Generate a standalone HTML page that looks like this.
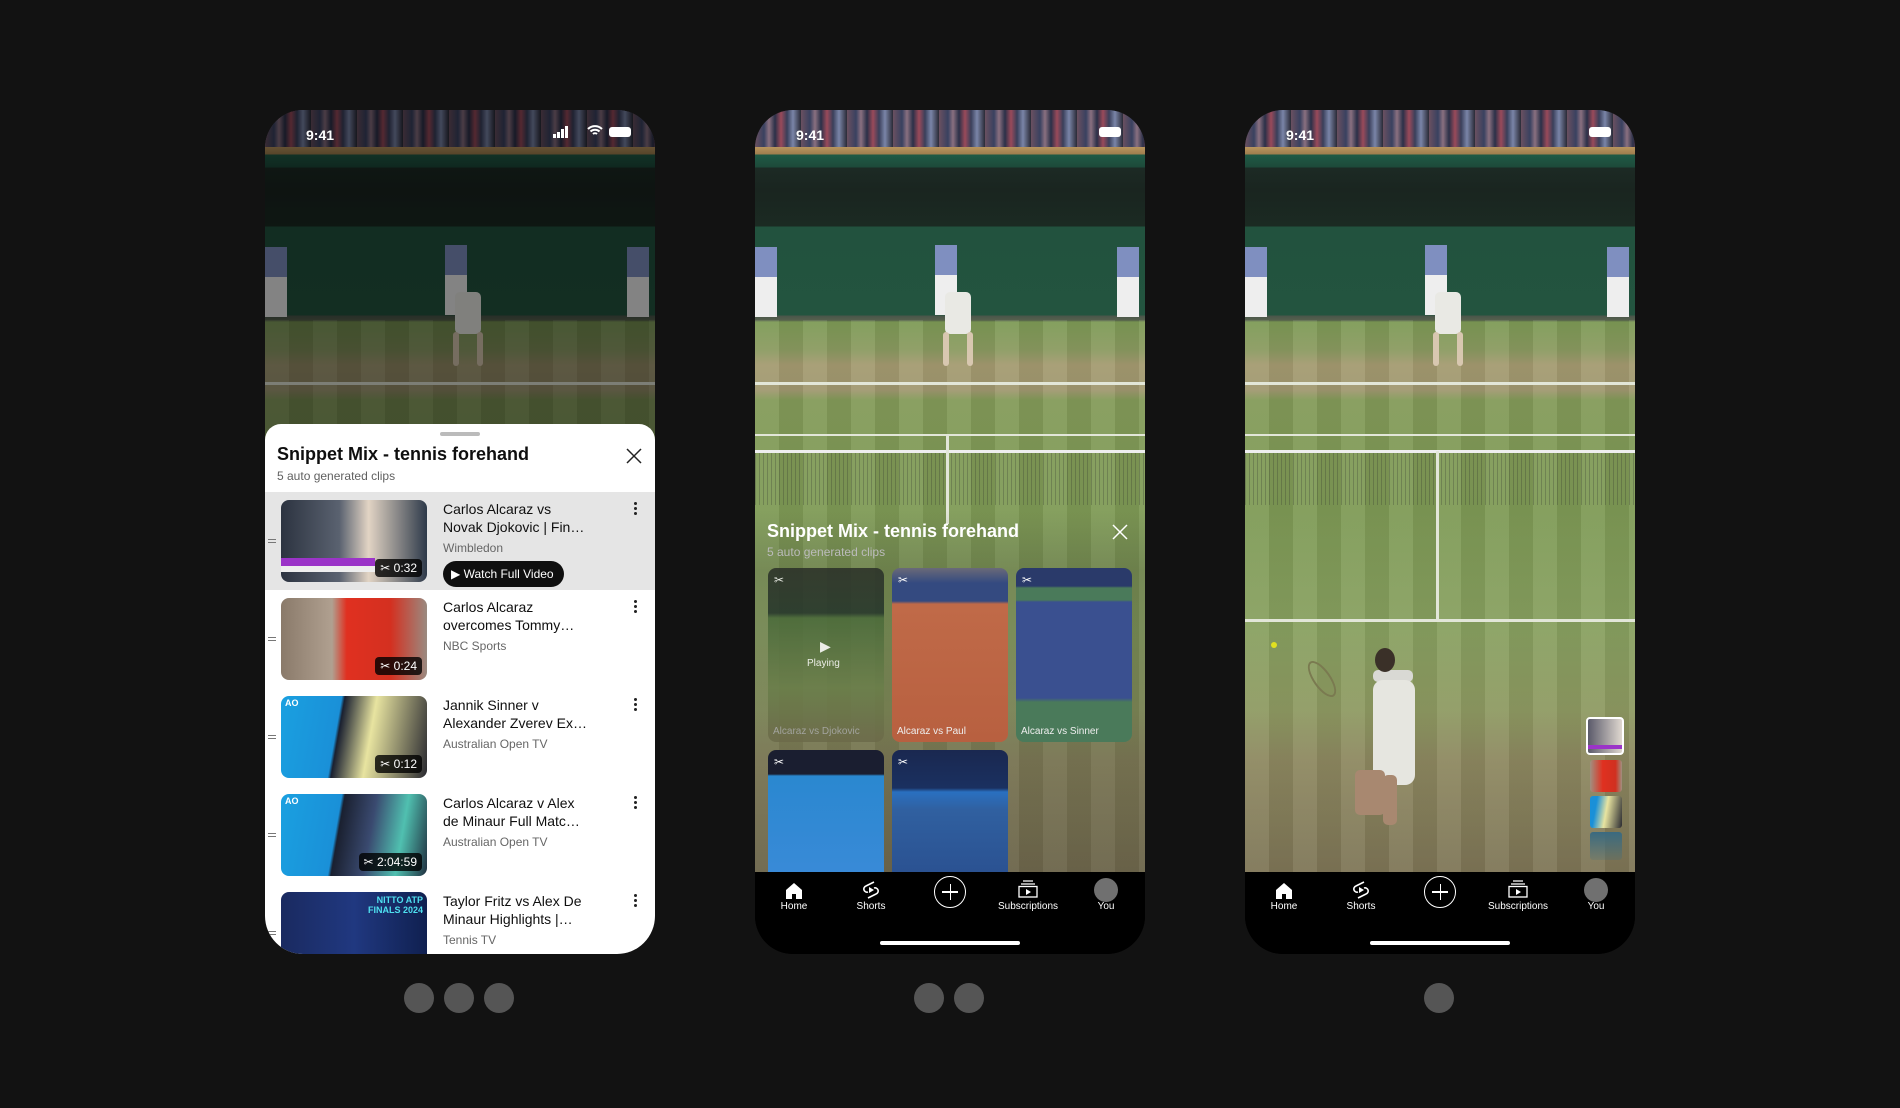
<!DOCTYPE html><html><head><meta charset="utf-8"><style>
*{margin:0;padding:0;box-sizing:border-box}
body{width:1900px;height:1108px;background:#121212;position:relative;overflow:hidden;font-family:"Liberation Sans",sans-serif}
.ph{position:absolute;top:110px;width:390px;height:844px;border-radius:38px;overflow:hidden;background:#000}
.vid{position:absolute;left:0;top:0;width:390px;height:762px;
background:linear-gradient(180deg,#3a3340 0,#3b3a4a 36px,#b8955e 37px,#a07e4e 44px,#1f5a45 45px,#1d4a3a 57px,#1c2a24 58px,#1a2520 80px,#1b2a22 116px,#22523e 117px,#23543f 205px,#4a564a 206px,#55604d 210px,#7d9a55 212px,#8a9a60 240px,#a49a70 255px,#a09870 280px,#839a58 290px,#7e9a55 400px,#88a060 520px,#8e9a62 600px,#8d8860 650px,#7e7556 762px)}
.stripes{position:absolute;left:0;top:210px;width:390px;height:552px;background:repeating-linear-gradient(90deg,rgba(255,255,255,.06) 0,rgba(255,255,255,.06) 24px,rgba(0,0,0,.05) 24px,rgba(0,0,0,.05) 48px)}
.crowd{position:absolute;left:0;top:0;width:390px;height:37px;background:repeating-linear-gradient(90deg,#6a5060 0,#394160 9px,#8a7080 14px,#2b3048 20px,#9a4a5a 26px,#3a3f5a 32px,#7a85a8 38px,#2a2a36 46px)}
.ln{position:absolute;left:0;width:390px;height:3px;background:#e2e6d8}
.net{position:absolute;left:0;top:340px;width:390px;height:55px;background:repeating-linear-gradient(90deg,rgba(40,40,40,.25) 0 1px,transparent 1px 4px);border-top:3px solid #eee}
.cl{position:absolute;left:191px;top:324px;width:3px;height:90px;background:#e2e6d8}
.pl{position:absolute;background:#e9e9e4;border-radius:5px}
.jd{position:absolute;width:22px;height:70px;background:linear-gradient(180deg,#7f8fc0 0,#7f8fc0 30px,#eee 30px)}
.dim{position:absolute;left:0;top:0;width:390px;height:762px;background:rgba(0,0,0,.45)}
.st{position:absolute;top:0;left:0;width:390px;height:44px;color:#fff;font-size:14px;font-weight:bold}
.nav{position:absolute;left:0;top:762px;width:390px;height:82px;background:#000;color:#fff;font-size:10px}
.ni{position:absolute;top:29px;width:90px;margin-left:-45px;text-align:center}
.ic{position:absolute;top:8px}
.home{position:absolute;left:125px;top:69px;width:140px;height:4px;border-radius:2px;background:#fff}
.dot{position:absolute;top:983px;width:30px;height:30px;border-radius:50%;background:#555}
.sheet{position:absolute;left:0;top:314px;width:390px;height:530px;background:#fff;border-radius:16px 16px 0 0;overflow:hidden}
.row{position:absolute;left:0;width:390px;height:98px}
.th{position:absolute;left:16px;top:8px;width:146px;height:82px;border-radius:8px;overflow:hidden}
.tt{position:absolute;left:178px;top:8px;font-size:14px;line-height:18px;color:#0f0f0f;width:180px}
.ch{font-size:12px;color:#666;margin-top:3px}
.kb{position:absolute;left:369px;top:10px;width:3px}
.kb i{display:block;width:3px;height:3px;border-radius:50%;background:#222;margin-bottom:2px}
.dur{position:absolute;right:5px;bottom:5px;background:rgba(0,0,0,.8);color:#fff;font-size:12px;padding:2px 5px;border-radius:4px}
.hd{position:absolute;left:3px;top:47px;width:8px;height:4px;border-top:1px solid #777;border-bottom:1px solid #777}
.tile{position:absolute;width:116px;border-radius:8px;overflow:hidden}
.tile span{position:absolute;left:5px;bottom:5px;font-size:10px;color:#eee}
.sc{position:absolute;left:6px;top:5px;color:#fff;font-size:12px}
</style></head><body>

<!-- phone 1 -->
<div class="ph" style="left:265px">
 <div class="vid"></div><div class="stripes"></div><div class="crowd"></div><div class="ln" style="top:272px"></div>
 <div class="jd" style="left:0;top:137px"></div><div class="jd" style="left:180px;top:135px"></div><div class="jd" style="left:362px;top:137px"></div>
 <div class="pl" style="left:190px;top:182px;width:26px;height:42px"></div>
 <div class="pl" style="left:188px;top:222px;width:6px;height:34px;background:#d8c7b0"></div>
 <div class="pl" style="left:212px;top:222px;width:6px;height:34px;background:#d8c7b0"></div>
 <div class="dim"></div>
 <div class="st"><span style="position:absolute;left:41px;top:17px">9:41</span><span style="position:absolute;right:24px;top:17px;width:22px;height:10px;background:#fff;border-radius:3px"></span><svg style="position:absolute;right:86px;top:16px" width="16" height="12"><rect x="0" y="8" width="3" height="4" fill="#fff"/><rect x="4" y="6" width="3" height="6" fill="#fff"/><rect x="8" y="3" width="3" height="9" fill="#fff"/><rect x="12" y="0" width="3" height="12" fill="#fff"/></svg><svg style="position:absolute;right:52px;top:15px" width="16" height="12" viewBox="0 0 16 12"><path d="M1 4a10 10 0 0 1 14 0M3.5 6.5a6.5 6.5 0 0 1 9 0M6 9a3 3 0 0 1 4 0" stroke="#fff" stroke-width="2" fill="none"/></svg></div>
 <div class="sheet">
  <div style="position:absolute;left:175px;top:8px;width:40px;height:4px;border-radius:2px;background:#bbb"></div>
  <div style="position:absolute;left:12px;top:20px;font-size:18px;font-weight:bold;color:#0f0f0f">Snippet Mix - tennis forehand</div>
  <div style="position:absolute;left:12px;top:45px;font-size:12px;color:#606060">5 auto generated clips</div>
  <svg style="position:absolute;left:361px;top:24px" width="16" height="16"><path d="M1 1L15 15M15 1L1 15" stroke="#222" stroke-width="1.5"/></svg>
  <div class="row" style="top:68px;background:#e5e5e5"><div class="hd"></div>
   <div class="th" style="background:linear-gradient(90deg,#2c3340,#5a6270 40%,#e2d4c4 60%,#2e3a4a)"><div style="position:absolute;left:0;top:58px;width:94px;height:8px;background:#9b34c8"></div><div style="position:absolute;left:0;top:66px;width:94px;height:6px;background:#eee"></div><div class="dur">✂ 0:32</div></div>
   <div class="tt">Carlos Alcaraz vs<br>Novak Djokovic | Fin…<div class="ch">Wimbledon</div>
   <div style="margin-top:4px;display:inline-block;background:#0f0f0f;color:#fff;font-size:12px;padding:4px 10px 4px 8px;border-radius:14px">▶ Watch Full Video</div></div>
   <div class="kb"><i></i><i></i><i></i></div></div>
  <div class="row" style="top:166px"><div class="hd"></div>
   <div class="th" style="background:linear-gradient(90deg,#8a7a6a,#b0a090 35%,#e03020 45%,#d43020 75%,#9a8a80)"><div class="dur">✂ 0:24</div></div>
   <div class="tt">Carlos Alcaraz<br>overcomes Tommy…<div class="ch">NBC Sports</div></div><div class="kb"><i></i><i></i><i></i></div></div>
  <div class="row" style="top:264px"><div class="hd"></div>
   <div class="th" style="background:linear-gradient(100deg,#1aa0e0 0,#1a90d8 38%,#1a2030 40%,#e8e4a0 60%,#2a2a30)"><b style="position:absolute;left:4px;top:2px;color:#fff;font-size:9px">AO</b><div class="dur">✂ 0:12</div></div>
   <div class="tt">Jannik Sinner v<br>Alexander Zverev Ex…<div class="ch">Australian Open TV</div></div><div class="kb"><i></i><i></i><i></i></div></div>
  <div class="row" style="top:362px"><div class="hd"></div>
   <div class="th" style="background:linear-gradient(100deg,#1aa0e0 0,#1a90d8 38%,#1a2030 40%,#3a4a70 60%,#50c0b0 80%,#203040)"><b style="position:absolute;left:4px;top:2px;color:#fff;font-size:9px">AO</b><div class="dur">✂ 2:04:59</div></div>
   <div class="tt">Carlos Alcaraz v Alex<br>de Minaur Full Matc…<div class="ch">Australian Open TV</div></div><div class="kb"><i></i><i></i><i></i></div></div>
  <div class="row" style="top:460px"><div class="hd"></div>
   <div class="th" style="background:linear-gradient(90deg,#1a2a60,#203880 50%,#102050)"><b style="position:absolute;right:4px;top:3px;color:#4ee0f0;font-size:9px;text-align:right">NITTO ATP<br>FINALS 2024</b></div>
   <div class="tt">Taylor Fritz vs Alex De<br>Minaur Highlights |…<div class="ch">Tennis TV</div></div><div class="kb"><i></i><i></i><i></i></div></div>
 </div>
</div>

<!-- phone 2 -->
<div class="ph" style="left:755px">
 <div class="vid"></div><div class="stripes"></div><div class="crowd"></div>
 <div class="ln" style="top:272px"></div><div class="ln" style="top:324px;height:2px"></div><div class="net"></div><div class="cl"></div>
 <div class="jd" style="left:0;top:137px"></div><div class="jd" style="left:180px;top:135px"></div><div class="jd" style="left:362px;top:137px"></div>
 <div class="pl" style="left:190px;top:182px;width:26px;height:42px"></div>
 <div class="pl" style="left:188px;top:222px;width:6px;height:34px;background:#d8c7b0"></div>
 <div class="pl" style="left:212px;top:222px;width:6px;height:34px;background:#d8c7b0"></div>
 <div style="position:absolute;left:0;top:400px;width:390px;height:362px;background:linear-gradient(180deg,rgba(40,40,30,0),rgba(40,40,30,.2) 60px)"></div>
 <div class="st"><span style="position:absolute;left:41px;top:17px">9:41</span><span style="position:absolute;right:24px;top:17px;width:22px;height:10px;background:#fff;border-radius:3px"></span></div>
 <div style="position:absolute;left:12px;top:411px;font-size:18px;font-weight:bold;color:#fff">Snippet Mix - tennis forehand</div>
 <div style="position:absolute;left:12px;top:435px;font-size:12px;color:#bbb">5 auto generated clips</div>
 <svg style="position:absolute;left:357px;top:414px" width="16" height="16"><path d="M1 1L15 15M15 1L1 15" stroke="#fff" stroke-width="1.5"/></svg>
 <div class="tile" style="left:13px;top:458px;height:174px;background:linear-gradient(180deg,#2a2f28 0,#24342a 45px,#4a6a3a 50px,#6a7e4a 120px,#6c6a4a 174px);opacity:.85"><div class="sc">✂</div><div style="position:absolute;left:52px;top:70px;color:#fff;font-size:14px">▶</div><div style="position:absolute;left:39px;top:90px;color:#fff;font-size:10px">Playing</div><span style="color:#aaa">Alcaraz vs Djokovic</span></div>
 <div class="tile" style="left:137px;top:458px;height:174px;background:linear-gradient(180deg,#6a6a78 0,#344a80 15px,#344a80 33px,#c06a48 36px,#b86040 174px)"><div class="sc">✂</div><span>Alcaraz vs Paul</span></div>
 <div class="tile" style="left:261px;top:458px;height:174px;background:linear-gradient(180deg,#2a3a6a 0,#2a3a6a 18px,#4a7a5a 20px,#4a7a5a 32px,#3a5090 34px,#3a5090 130px,#4a7a5a 134px)"><div class="sc">✂</div><span>Alcaraz vs Sinner</span></div>
 <div class="tile" style="left:13px;top:640px;height:130px;background:linear-gradient(180deg,#1a1e30 0,#1a1e30 24px,#2a88d0 26px,#3a8ad8 130px)"><div class="sc">✂</div></div>
 <div class="tile" style="left:137px;top:640px;height:130px;background:linear-gradient(180deg,#1a2850 0,#1a3060 38px,#2a70c0 42px,#3060a0 60px,#2a5090 130px)"><div class="sc">✂</div></div>
 <div class="nav">
  <svg class="ic" style="left:30px;top:10px" width="18" height="18" viewBox="0 0 18 18"><path d="M1 8L9 1L17 8V17H11V12H7V17H1Z" fill="#fff"/></svg><div class="ni" style="left:39px">Home</div>
  <svg class="ic" style="left:107px" width="18" height="20" viewBox="0 0 18 20"><path d="M12 2L4 6a3 3 0 0 0 2 6M6 18l8-4a3 3 0 0 0-2-6" stroke="#fff" stroke-width="1.6" fill="none"/><path d="M7 7l5 3-5 3z" fill="#fff"/></svg><div class="ni" style="left:116px">Shorts</div>
  <div style="position:absolute;left:179px;top:4px;width:32px;height:32px;border:1.5px solid #fff;border-radius:50%"><div style="position:absolute;left:7px;top:14px;width:16px;height:1.5px;background:#fff"></div><div style="position:absolute;left:14.5px;top:7px;width:1.5px;height:16px;background:#fff"></div></div>
  <svg class="ic" style="left:263px" width="20" height="18" viewBox="0 0 20 18"><path d="M5 1H15M3 4H17" stroke="#fff" stroke-width="1.2"/><rect x="1" y="6.5" width="18" height="10.5" stroke="#fff" stroke-width="1.3" fill="none"/><path d="M8 9l5 3-5 3z" fill="#fff"/></svg><div class="ni" style="left:273px">Subscriptions</div>
  <div style="position:absolute;left:339px;top:6px;width:24px;height:24px;border-radius:50%;background:#707070"></div><div class="ni" style="left:351px">You</div>
  <div class="home"></div>
 </div>
</div>

<!-- phone 3 -->
<div class="ph" style="left:1245px">
 <div class="vid"></div><div class="stripes"></div><div class="crowd"></div>
 <div class="ln" style="top:272px"></div><div class="ln" style="top:324px;height:2px"></div><div class="net"></div><div class="cl" style="top:341px;height:168px"></div>
 <div class="ln" style="top:509px"></div>
 <div class="jd" style="left:0;top:137px"></div><div class="jd" style="left:180px;top:135px"></div><div class="jd" style="left:362px;top:137px"></div>
 <div class="pl" style="left:190px;top:182px;width:26px;height:42px"></div>
 <div class="pl" style="left:188px;top:222px;width:6px;height:34px;background:#d8c7b0"></div>
 <div class="pl" style="left:212px;top:222px;width:6px;height:34px;background:#d8c7b0"></div>
 <div class="pl" style="left:128px;top:560px;width:40px;height:12px;background:#d9d9d4"></div>
 <div class="pl" style="left:128px;top:570px;width:42px;height:105px;background:#e6e6e0;border-radius:10px"></div>
 <div style="position:absolute;left:130px;top:538px;width:20px;height:24px;border-radius:50%;background:#3a3028"></div>
 <div class="pl" style="left:110px;top:660px;width:30px;height:45px;background:#a88870"></div>
 <div class="pl" style="left:138px;top:665px;width:14px;height:50px;background:#a88870"></div>
 <div style="position:absolute;left:68px;top:548px;width:18px;height:42px;border:2px solid #7a7a50;border-radius:50%;transform:rotate(-35deg)"></div>
 <div style="position:absolute;left:26px;top:532px;width:6px;height:6px;border-radius:50%;background:#e0e020"></div>
 <div style="position:absolute;left:341px;top:607px;width:38px;height:38px;border:2px solid #fff;border-radius:4px;background:linear-gradient(90deg,#5a5a6a,#e0d8d0);overflow:hidden"><div style="position:absolute;left:0;top:26px;width:40px;height:4px;background:#9b34c8"></div></div>
 <div style="position:absolute;left:345px;top:650px;width:32px;height:32px;border-radius:3px;background:linear-gradient(90deg,#a09080,#e03020 40%,#d03020 80%,#a09080)"></div>
 <div style="position:absolute;left:345px;top:686px;width:32px;height:32px;border-radius:3px;background:linear-gradient(100deg,#1a90d8 20%,#e8e4a0 50%,#2a2a30)"></div>
 <div style="position:absolute;left:345px;top:722px;width:32px;height:28px;border-radius:3px;background:linear-gradient(180deg,#3a6a80,rgba(60,110,130,.2))"></div>
 <div class="st"><span style="position:absolute;left:41px;top:17px">9:41</span><span style="position:absolute;right:24px;top:17px;width:22px;height:10px;background:#fff;border-radius:3px"></span></div>
 <div class="nav">
  <svg class="ic" style="left:30px;top:10px" width="18" height="18" viewBox="0 0 18 18"><path d="M1 8L9 1L17 8V17H11V12H7V17H1Z" fill="#fff"/></svg><div class="ni" style="left:39px">Home</div>
  <svg class="ic" style="left:107px" width="18" height="20" viewBox="0 0 18 20"><path d="M12 2L4 6a3 3 0 0 0 2 6M6 18l8-4a3 3 0 0 0-2-6" stroke="#fff" stroke-width="1.6" fill="none"/><path d="M7 7l5 3-5 3z" fill="#fff"/></svg><div class="ni" style="left:116px">Shorts</div>
  <div style="position:absolute;left:179px;top:4px;width:32px;height:32px;border:1.5px solid #fff;border-radius:50%"><div style="position:absolute;left:7px;top:14px;width:16px;height:1.5px;background:#fff"></div><div style="position:absolute;left:14.5px;top:7px;width:1.5px;height:16px;background:#fff"></div></div>
  <svg class="ic" style="left:263px" width="20" height="18" viewBox="0 0 20 18"><path d="M5 1H15M3 4H17" stroke="#fff" stroke-width="1.2"/><rect x="1" y="6.5" width="18" height="10.5" stroke="#fff" stroke-width="1.3" fill="none"/><path d="M8 9l5 3-5 3z" fill="#fff"/></svg><div class="ni" style="left:273px">Subscriptions</div>
  <div style="position:absolute;left:339px;top:6px;width:24px;height:24px;border-radius:50%;background:#707070"></div><div class="ni" style="left:351px">You</div>
  <div class="home"></div>
 </div>
</div>

<div class="dot" style="left:404px"></div><div class="dot" style="left:444px"></div><div class="dot" style="left:484px"></div>
<div class="dot" style="left:914px"></div><div class="dot" style="left:954px"></div>
<div class="dot" style="left:1424px"></div>
</body></html>
